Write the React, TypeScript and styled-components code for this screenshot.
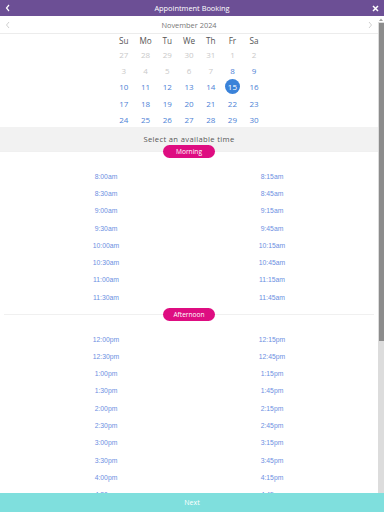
import React from "react";
import styled, { createGlobalStyle } from "styled-components";

const GlobalStyle = createGlobalStyle`
  html, body { margin: 0; padding: 0; overflow: hidden; background: #fff; }
  * { box-sizing: border-box; }
`;

const Frame = styled.div`
  position: relative;
  width: 384px;
  height: 512px;
  display: flex;
  flex-direction: column;
  font-family: "Open Sans", "Noto Sans", sans-serif;
  background: #fff;
`;

const Header = styled.div`
  height: 16px;
  flex: none;
  background: #6c4f95;
  display: flex;
  align-items: center;
  justify-content: space-between;
  padding: 0 4px;
  color: #fff;
`;

const HeaderTitle = styled.div`
  font-size: 7.4px;
  line-height: 16px;
  color: #fff;
`;

const IconBox = styled.div`
  width: 8px;
  height: 8px;
  display: flex;
  align-items: center;
  justify-content: center;
`;

const Body = styled.div`
  flex: 1;
  min-height: 0;
  display: flex;
`;

const Content = styled.div`
  flex: 1;
  min-width: 0;
  overflow: hidden;
`;

const ScrollTrack = styled.div`
  width: 6px;
  flex: none;
  display: flex;
  flex-direction: column;
  background: #dcdcdc;
`;

const ScrollArrow = styled.div`
  height: 6px;
  background: #fff;
  display: flex;
  align-items: center;
  justify-content: center;
`;

const ScrollThumb = styled.div`
  height: 318px;
  margin: 1px 0 0 1px;
  background: #8c8c8c;
`;

const MonthNav = styled.div`
  height: 18px;
  border-bottom: 1px solid #ececec;
  display: flex;
  align-items: center;
  justify-content: space-between;
  padding: 0 5px;
`;

const MonthLabel = styled.div`
  font-size: 7.4px;
  color: #777;
`;

const CalendarGrid = styled.div`
  width: 152px;
  margin: 0 auto;
  display: grid;
  grid-template-columns: repeat(7, 1fr);
  grid-template-rows: 12px;
  grid-auto-rows: 16.3px;
`;

const WeekDay = styled.div`
  display: flex;
  align-items: center;
  justify-content: center;
  font-size: 8.2px;
  color: #555;
`;

const Day = styled.div<{ $muted?: boolean; $selected?: boolean }>`
  display: flex;
  align-items: center;
  justify-content: center;
  font-size: 8px;
  color: ${(p) => (p.$selected ? "#fff" : p.$muted ? "#c9c9c9" : "#4d82d6")};
  & > span {
    width: 15px;
    height: 15px;
    border-radius: 50%;
    display: flex;
    align-items: center;
    justify-content: center;
    background: ${(p) => (p.$selected ? "#3a82d9" : "transparent")};
  }
`;

const Band = styled.div`
  height: 24px;
  background: #f2f2f2;
  display: flex;
  align-items: center;
  justify-content: center;
  font-size: 7.6px;
  letter-spacing: 0.35px;
  color: #555;
`;

const SectionHead = styled.div<{ $overlap?: boolean }>`
  position: relative;
  height: 13px;
  margin: ${(p) => (p.$overlap ? "-6.5px 0 0" : "0 4px")};
  display: flex;
  align-items: center;
  justify-content: center;
  &::before {
    content: "";
    position: absolute;
    left: 0;
    right: 0;
    top: 6px;
    height: 1px;
    background: #f0f0f0;
  }
`;

const Pill = styled.div`
  position: relative;
  width: 52px;
  height: 13px;
  border-radius: 7px;
  background: #de0d81;
  color: #fff;
  font-size: 6.6px;
  font-weight: 500;
  display: flex;
  align-items: center;
  justify-content: center;
`;

const SlotGrid = styled.div<{ $last?: boolean }>`
  display: grid;
  grid-template-columns: 1fr 1fr;
  grid-auto-rows: 17.3px;
  padding: 9.5px 23px ${(p) => (p.$last ? "30px" : "2px")};
`;

const Slot = styled.div`
  display: flex;
  align-items: center;
  justify-content: center;
  font-family: "Liberation Sans", Arial, sans-serif;
  font-size: 6.8px;
  color: #6d90e2;
`;

const NextBar = styled.div`
  position: absolute;
  left: 0;
  right: 0;
  bottom: 0;
  height: 19px;
  background: #7fdfdd;
  color: #fff;
  font-size: 7px;
  display: flex;
  align-items: center;
  justify-content: center;
`;

const Chevron = ({ dir, color, w = 1 }: { dir: "l" | "r"; color: string; w?: number }) => (
  <svg width="6" height="8" viewBox="0 0 6 8">
    <path
      d={dir === "l" ? "M4 1 L1.5 4 L4 7" : "M2 1 L4.5 4 L2 7"}
      fill="none"
      stroke={color}
      strokeWidth={w}
    />
  </svg>
);

const weekDays = ["Su", "Mo", "Tu", "We", "Th", "Fr", "Sa"];
const days: { n: number; muted?: boolean }[] = [
  ...[27, 28, 29, 30, 31].map((n) => ({ n, muted: true })),
  ...Array.from({ length: 30 }, (_, i) => ({ n: i + 1, muted: i + 1 < 8 })),
];

function makeSlots(startHour: number, rows: number, suffix: string) {
  const list: string[] = [];
  for (let i = 0; i < rows * 2; i++) {
    const mins = startHour * 60 + i * 15;
    const h24 = Math.floor(mins / 60);
    const m = mins % 60;
    const h = h24 % 12 === 0 ? 12 : h24 % 12;
    list.push(`${h}:${m.toString().padStart(2, "0")}${suffix}`);
  }
  return list;
}

const sections = [
  { name: "Morning", slots: makeSlots(8, 8, "am") },
  { name: "Afternoon", slots: makeSlots(12, 12, "pm") },
  { name: "Evening", slots: makeSlots(18, 10, "pm") },
];

export default function App() {
  return (
    <Frame>
      <GlobalStyle />
      <Header>
        <IconBox>
          <Chevron dir="l" color="#fff" w={1.2} />
        </IconBox>
        <HeaderTitle>Appointment Booking</HeaderTitle>
        <IconBox>
          <svg width="7" height="7" viewBox="0 0 7 7">
            <path d="M1 1 L6 6 M6 1 L1 6" stroke="#fff" strokeWidth="1.5" />
          </svg>
        </IconBox>
      </Header>
      <Body>
        <Content>
          <MonthNav>
            <Chevron dir="l" color="#c4c4c4" w={0.8} />
            <MonthLabel>November 2024</MonthLabel>
            <Chevron dir="r" color="#c4c4c4" w={0.8} />
          </MonthNav>
          <CalendarGrid>
            {weekDays.map((d) => (
              <WeekDay key={d}>{d}</WeekDay>
            ))}
            {days.map((d, i) => (
              <Day key={i} $muted={d.muted} $selected={!d.muted && d.n === 15}>
                <span>{d.n}</span>
              </Day>
            ))}
          </CalendarGrid>
          <Band>Select an available time</Band>
          {sections.map((s, si) => (
            <React.Fragment key={s.name}>
              <SectionHead $overlap={si === 0}>
                <Pill>{s.name}</Pill>
              </SectionHead>
              <SlotGrid $last={si === sections.length - 1}>
                {s.slots.map((t) => (
                  <Slot key={t}>{t}</Slot>
                ))}
              </SlotGrid>
            </React.Fragment>
          ))}
        </Content>
        <ScrollTrack>
          <ScrollArrow>
            <svg width="4" height="3" viewBox="0 0 4 3">
              <path d="M0 3 L2 0.5 L4 3 Z" fill="#a0a0a0" />
            </svg>
          </ScrollArrow>
          <ScrollThumb />
        </ScrollTrack>
      </Body>
      <NextBar>Next</NextBar>
    </Frame>
  );
}
